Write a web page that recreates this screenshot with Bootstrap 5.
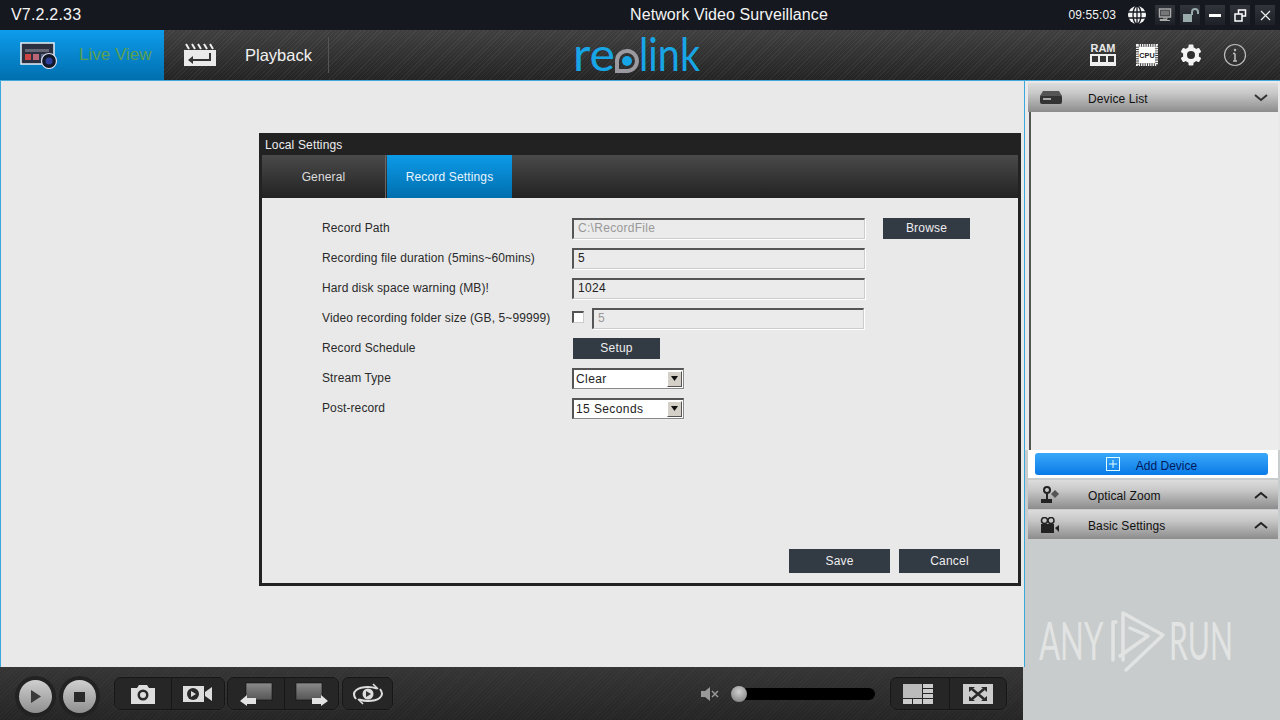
<!DOCTYPE html>
<html lang="en">
<head>
<meta charset="utf-8">
<title>Network Video Surveillance</title>
<link href="https://cdn.jsdelivr.net/npm/bootstrap@5.3.0/dist/css/bootstrap.min.css" rel="stylesheet">
<style>
html,body{height:720px;overflow:hidden}
body{width:1280px;font-family:"Liberation Sans",Arial,sans-serif;font-size:12px;color:#222;background:#c9cccc;position:relative}
.tbar{height:30px;background:#15181f;color:#f4f4f4}
.ver{width:630px;padding-left:11px;font-size:16px;letter-spacing:.2px}
.ttl{font-size:16px;letter-spacing:.1px}
.clk{font-size:12px;margin-right:11px;letter-spacing:.1px}
.wbtn{width:20px;height:20px;margin-right:5px;background:linear-gradient(#31343a,#1d2026);display:flex;align-items:center;justify-content:center}
.tools{height:51px;background:repeating-linear-gradient(135deg,rgba(255,255,255,.05) 0 1px,transparent 1px 3px),linear-gradient(#3f3f3f,#232323);border-bottom:1px solid #46a9dd;color:#f2f2f2}
.livetab{width:164px;height:50px;background:linear-gradient(#0e9cec,#006fae);font-size:17px;color:#5b9f52;gap:21px;padding-left:20px}
.playtab{width:165px;height:36px;gap:28px;padding-left:19px;font-size:16.5px;border-right:1px solid #555}
.brand{margin-left:244px;width:130px;height:50px}
.brand svg{display:block;margin-top:-8px}
.rtools{gap:0;margin-right:23px}
.rtool{width:44px;display:flex;justify-content:center}
.stage{height:639px}
.leftcol{width:1025px}
.work{height:586px;background:#e9e9e9;border-left:1px solid #3aa7dd;border-right:1px solid #3aa7dd;padding:52px 0 0 258px}
.dlg{width:762px;height:453px;border:3px solid #222;border-top:0;background:#e9e9e9}
.dlgttl{height:22px;background:#222;color:#eee;padding:2px 0 0 3px;font-size:12px;letter-spacing:.15px}
.dlgtabs{height:43px;background:linear-gradient(#4a4a4a,#222)}
.dtab{height:43px;display:flex;align-items:center;justify-content:center;color:#ddd;border:0;border-radius:0;background:transparent;font-size:12px;padding:0;letter-spacing:.15px}
.dtab1{width:124px;border-right:1px solid #666}
.dtab2{width:125px;background:linear-gradient(#0c9ae8,#006fae);color:#e8f6ff;margin-left:1px}
.dbody{padding:20px 18px 10px 60px;height:385px}
.frow{height:20px;margin-bottom:10px;display:flex;align-items:center}
.flab{width:250px;color:#2a2a2a;letter-spacing:.1px}
.fld.form-control{width:293px;height:21px;padding:0 4px 2px;border-radius:0;font-size:12px;color:#222;background:#ebebeb;border-width:2px 1px 1px 2px;border-style:solid;border-color:#555 #ccc #ccc #555;box-shadow:1px 1px 0 #fff;letter-spacing:.3px}
.fld.form-control:disabled{color:#999;background:#ebebeb}
.fld.shortfld{width:272px;margin-left:8px}
.chk.form-check-input{width:12px;height:12px;margin:-2px 0 0;border-radius:0;border-width:2px 1px 1px 2px;border-color:#555 #ccc #ccc #555;flex:none}
.dbtn.btn{background:#323a44;color:#eee;border:0;border-radius:0;font-size:12px;padding:0;height:21px;width:87px;letter-spacing:.2px}
.bwse.btn{margin-left:18px}
.setupb.btn{margin-left:1px}
.wide.btn{width:101px;height:24px}
.actions{gap:9px}
.selbox{width:112px;height:21px;border-width:2px 1px 1px 2px;border-style:solid;border-color:#555 #888 #888 #555;background:#fff;box-shadow:1px 1px 0 #eee}
.selbox .form-select{border:0;border-radius:0;background:transparent;padding:0 0 0 2px;height:18px;font-size:12px;color:#222;letter-spacing:.4px;flex:1;min-width:0}
.selarr{width:15px;height:16px;margin:1px;background:#d4d0c8;border:1px solid;border-color:#fff #555 #555 #fff;display:flex;align-items:center;justify-content:center}
.btbar{height:53px;width:1023px;background:repeating-linear-gradient(135deg,rgba(255,255,255,.025) 0 1px,transparent 1px 3px),linear-gradient(#353535,#252525);padding-left:19px}
.rbtn{width:33px;height:33px;border-radius:50%;background:linear-gradient(#cfcfcf,#8f8f8f);box-shadow:0 0 0 4px #222;display:flex;align-items:center;justify-content:center;margin:6px 11px 0 0;flex:none}
.bgrp{height:33px;background:#262626;border:1px solid #161616;border-radius:6px;box-shadow:0 0 1px #555}
.bcell{display:flex;align-items:center;justify-content:center;height:100%}
.bcell+.bcell{border-left:1px solid #161616}
.track{width:137px;height:12px;border-radius:6px;background:#000;position:relative}
.knob{position:absolute;left:-7px;top:-2px;width:16px;height:16px;border-radius:50%;background:radial-gradient(circle at 50% 35%,#cfcfcf,#777)}
.side{width:255px;height:639px;background:#c9cccc}
.sidetop{height:369px;background:#e9e9e9;padding:2px 2px 0 3px}
.phead{height:29px;background:linear-gradient(#dcdcdc,#c8c8c8 35%,#8c8c8c);color:#111;display:flex;align-items:center;position:relative;letter-spacing:.1px}
.phead .pic{width:60px;padding-left:12px;display:flex}
.phead .ptxt{padding-top:2px}
.phead .chev{margin-left:auto;margin-right:10px;display:flex}
.devlist{height:338px;border-left:2px solid #555;margin-left:1px;background:#ececec}
.addband{height:28px;margin-left:3px;width:250px;background:#fff;padding:3px 10px 3px 7px}
.addbtn.btn{width:233px;height:22px;border:0;border-radius:3px;background:linear-gradient(#3aa8f8,#0a7ae8);color:#001a5c;font-size:12px;padding:0;display:flex;align-items:center;justify-content:center;gap:16px}
.addbtn span{padding-top:4px}
.sidelow{padding:2px 2px 0 3px}
.sidelow .phead{height:29px;margin-bottom:1px}
.wmark{position:absolute;left:1036px;top:606px;pointer-events:none}
</style>
</head>
<body>
<header class="tbar d-flex align-items-center">
  <div class="ver">V7.2.2.33</div>
  <div class="ttl">Network Video Surveillance</div>
  <div class="ms-auto d-flex align-items-center">
    <span class="clk">09:55:03</span>
    <svg width="20" height="20" viewBox="0 0 20 20" class="me-2"><circle cx="10" cy="10" r="9" fill="#f4f4f4"/><g stroke="#15181f" stroke-width="1.3" fill="none"><ellipse cx="10" cy="10" rx="4" ry="9"/><path d="M1 7h18M1 13h18M10 1v18"/></g></svg>
    <div class="wbtn"><svg width="14" height="14" viewBox="0 0 14 14"><rect x="1.500" y="1" width="11" height="8" fill="none" stroke="#aaa" stroke-width="1.500"/><rect x="3" y="2.500" width="8" height="5" fill="#777"/><path d="M5 10h4v1.500H2v1h10" stroke="#aaa" fill="none"/></svg></div>
    <div class="wbtn"><svg width="17" height="15" viewBox="0 0 17 15"><rect x="1" y="6" width="9" height="8" fill="#9aa"/><path d="M10 7V4a3 3 0 0 1 6 0v2" stroke="#9aa" stroke-width="2" fill="none"/></svg></div>
    <div class="wbtn"><svg width="12" height="4"><rect width="12" height="3" y="1" fill="#fff"/></svg></div>
    <div class="wbtn"><svg width="13" height="13" viewBox="0 0 13 13" fill="none" stroke="#fff" stroke-width="1.500"><rect x="4.500" y="1" width="7" height="6"/><rect x="1" y="5" width="7" height="7" fill="#2a2d33"/></svg></div>
    <div class="wbtn"><svg width="11" height="11" viewBox="0 0 11 11" stroke="#eee" stroke-width="1.200"><path d="M1 1l9 9M10 1l-9 9"/></svg></div>
  </div>
</header>

<nav class="tools d-flex align-items-center">
  <div class="livetab d-flex align-items-center">
    <svg width="38" height="28" viewBox="0 0 38 28"><rect x="1" y="2" width="33" height="21" fill="#2a3040" stroke="#e8eef4" stroke-width="1.500"/><rect x="5" y="8" width="24" height="3" fill="#667"/><rect x="5" y="13" width="6" height="6" fill="#c44"/><rect x="13" y="13" width="6" height="6" fill="#b67"/><rect x="21" y="13" width="6" height="6" fill="#568"/><circle cx="29" cy="20" r="7.500" fill="#111827" stroke="#dde" stroke-width="1.200"/><circle cx="29" cy="20" r="3.500" fill="#2d3f9a"/></svg>
    <span>Live View</span>
  </div>
  <div class="playtab d-flex align-items-center">
    <svg width="34" height="24" viewBox="0 0 34 24"><path d="M1 7h32v16H1z" fill="#eaeaea"/><path d="M3 1l3 5M9 1l3 5M15 1l3 5M21 1l3 5M27 1l3 5" stroke="#eee" stroke-width="2"/><path d="M27 10v7H10" fill="none" stroke="#333" stroke-width="2"/><path d="M10 13v8l-5-4z" fill="#333"/></svg>
    <span>Playback</span>
  </div>
  <div class="brand">
    <svg width="130" height="66" viewBox="0 -8 130 66" role="img" aria-label="reolink">
      <text x="0" y="41" font-family="Lato,'Liberation Sans',sans-serif" font-size="46" fill="#17a5e6" textLength="42" lengthAdjust="spacingAndGlyphs">re</text>
      <path d="M44 41V30a10 10 0 1 1 10 11z" fill="none" stroke="#9a9aa0" stroke-width="4"/>
      <circle cx="54" cy="31" r="5" fill="#17a5e6"/>
      <text transform="translate(66 41) scale(.86 1)" font-family="Lato,'Liberation Sans',sans-serif" font-size="46" fill="#17a5e6">link</text>
    </svg>
  </div>
  <div class="rtools ms-auto d-flex align-items-center">
    <div class="rtool"><svg width="28" height="26" viewBox="0 0 28 26"><text x="14" y="10" text-anchor="middle" font-family="Liberation Sans" font-size="11" font-weight="700" fill="#e8e8e8">RAM</text><rect x="1" y="12" width="26" height="12" fill="#eee"/><g fill="#333"><rect x="3" y="14" width="6" height="6"/><rect x="11" y="14" width="6" height="6"/><rect x="19" y="14" width="6" height="6"/></g></svg></div>
    <div class="rtool"><svg width="22" height="22" viewBox="0 0 24 24"><rect x="1.500" y="1.500" width="21" height="21" fill="none" stroke="#f2f2f2" stroke-width="3" stroke-dasharray="1.500 1"/><rect x="3" y="3" width="18" height="18" fill="#fff"/><text x="12" y="15" text-anchor="middle" font-family="Liberation Sans" font-size="8" font-weight="700" fill="#222">CPU</text></svg></div>
    <div class="rtool"><svg width="24" height="24" viewBox="0 0 24 24"><g fill="#f4f4f4"><circle cx="12" cy="12" r="8"/><rect x="9.500" y="1.500" width="5" height="21" rx="1"/><rect x="9.500" y="1.500" width="5" height="21" rx="1" transform="rotate(60 12 12)"/><rect x="9.500" y="1.500" width="5" height="21" rx="1" transform="rotate(120 12 12)"/></g><circle cx="12" cy="12" r="4" fill="#2e2e2e"/></svg></div>
    <div class="rtool"><svg width="24" height="24" viewBox="0 0 24 24" fill="none" stroke="#bbb"><circle cx="12" cy="12" r="10.500" stroke-width="1.200"/><path d="M12 10.500V18M10 10.500h2M10 18h4" stroke-width="1.600"/><circle cx="12" cy="7" r="1.200" fill="#bbb" stroke="none"/></svg></div>
  </div>
</nav>

<div class="stage d-flex">
  <div class="leftcol">
    <main class="work">
      <section class="dlg d-flex flex-column">
        <div class="dlgttl d-flex align-items-center">Local Settings</div>
        <div class="dlgtabs nav">
          <button class="dtab dtab1 btn">General</button>
          <button class="dtab dtab2 btn">Record Settings</button>
        </div>
        <div class="dbody d-flex flex-column">
          <div class="frow"><span class="flab">Record Path</span><input class="fld form-control" disabled value="C:\RecordFile"><button class="dbtn bwse btn">Browse</button></div>
          <div class="frow"><span class="flab">Recording file duration (5mins~60mins)</span><input class="fld form-control" value="5"></div>
          <div class="frow"><span class="flab">Hard disk space warning (MB)!</span><input class="fld form-control" value="1024"></div>
          <div class="frow"><span class="flab">Video recording folder size (GB, 5~99999)</span><input type="checkbox" class="chk form-check-input"><input class="fld shortfld form-control" disabled value="5"></div>
          <div class="frow"><span class="flab">Record Schedule</span><button class="dbtn setupb btn">Setup</button></div>
          <div class="frow"><span class="flab">Stream Type</span><div class="selbox d-flex"><select class="form-select"><option>Clear</option></select><span class="selarr"><svg width="7" height="5"><path d="M0 0h7L3.500 5z" fill="#111"/></svg></span></div></div>
          <div class="frow"><span class="flab">Post-record</span><div class="selbox d-flex"><select class="form-select"><option>15 Seconds</option></select><span class="selarr"><svg width="7" height="5"><path d="M0 0h7L3.500 5z" fill="#111"/></svg></span></div></div>
          <div class="mt-auto d-flex justify-content-end actions">
            <button class="dbtn wide btn">Save</button>
            <button class="dbtn wide btn">Cancel</button>
          </div>
        </div>
      </section>
    </main>
    <footer class="btbar d-flex align-items-center">
      <div class="rbtn"><svg width="10" height="13"><path d="M0 0l10 6.500-10 6.500z" fill="#3a3a3a"/></svg></div>
      <div class="rbtn"><svg width="11" height="10"><rect width="11" height="10" fill="#2a2a2a"/></svg></div>
      <div class="bgrp d-flex" style="width:111px;margin-left:7px">
        <div class="bcell" style="width:56px"><svg width="26" height="20" viewBox="0 0 26 20"><path d="M1 4h6l2-3h8l2 3h6v16H1z" fill="#ddd"/><circle cx="13" cy="11" r="5.500" fill="#2a2a2a"/><circle cx="13" cy="11" r="3" fill="#ddd"/></svg></div>
        <div class="bcell flex-fill"><svg width="30" height="18" viewBox="0 0 30 18"><rect x="0" y="1" width="21" height="16" fill="#ddd"/><circle cx="10" cy="9" r="6" fill="#2a2a2a"/><path d="M8 6l5 3-5 3z" fill="#ddd"/><path d="M22 7l7-5v14l-7-5z" fill="#ddd"/></svg></div>
      </div>
      <div class="bgrp d-flex" style="width:112px;margin-left:2px">
        <div class="bcell" style="width:56px"><svg width="34" height="24" viewBox="0 0 34 24"><defs><linearGradient id="sc" x1="0" y1="0" x2="0" y2="1"><stop offset="0" stop-color="#8a8a8a"/><stop offset="1" stop-color="#555"/></linearGradient></defs><rect x="7" y="1" width="26" height="17" fill="url(#sc)" stroke="#111" stroke-width=".6"/><path d="M1 19l7-6v3h9v6H8v2z" fill="#e2e2e2"/></svg></div>
        <div class="bcell flex-fill"><svg width="34" height="24" viewBox="0 0 34 24"><rect x="1" y="1" width="26" height="17" fill="url(#sc)" stroke="#111" stroke-width=".6"/><path d="M33 19l-7-6v3h-9v6h9v2z" fill="#e2e2e2"/></svg></div>
      </div>
      <div class="bgrp d-flex justify-content-center align-items-center" style="width:51px;margin-left:3px"><svg width="34" height="22" viewBox="0 0 34 22" fill="none" stroke="#ddd" stroke-width="2"><path d="M5 16C-1 8 8 4 17 4c3 0 6 .500 9 1.500M29 6c6 8-3 12-12 12-3 0-6-.500-9-1.500"/><path d="M22 1l5 5M12 21l-5-5" stroke-width="1.600"/><circle cx="17" cy="11" r="5.500" fill="#ddd" stroke="none"/><path d="M15 8l5 3-5 3z" fill="#333" stroke="none"/></svg></div>
      <svg class="ms-auto" width="18" height="14" viewBox="0 0 18 14" style="margin-right:19px"><path d="M0 4h4l5-4v14l-5-4H0z" fill="#999"/><path d="M11 4l6 6M17 4l-6 6" stroke="#999" stroke-width="1.500"/></svg>
      <div class="track"><div class="knob"></div></div>
      <div class="bgrp d-flex" style="width:117px;margin-left:15px;margin-right:16px">
        <div class="bcell pe-1" style="width:58px"><svg width="30" height="20" viewBox="0 0 30 20"><rect width="19" height="14" fill="#bbb"/><g fill="#ccc"><rect x="20" width="10" height="4"/><rect x="20" y="5" width="10" height="4"/><rect x="20" y="10" width="10" height="4"/><rect y="15" width="9" height="5"/><rect x="10" y="15" width="9" height="5"/><rect x="20" y="15" width="10" height="5"/></g></svg></div>
        <div class="bcell flex-fill"><svg width="30" height="20" viewBox="0 0 30 20"><rect width="30" height="20" fill="#ccc"/><path d="M9 5l12 10M21 5L9 15" stroke="#2a2a2a" stroke-width="2.500"/><path d="M6 3h6L6 8zM24 3h-6l6 5zM6 17h6l-6-5zM24 17h-6l6-5z" fill="#2a2a2a"/></svg></div>
      </div>
    </footer>
  </div>
  <aside class="side">
    <div class="sidetop">
      <div class="phead">
        <span class="pic"><svg width="22" height="15" viewBox="0 0 22 15"><rect y="5" width="22" height="9" rx="2" fill="#333"/><path d="M3 1h16l3 5H0z" fill="#555"/><rect x="3" y="8" width="8" height="2" fill="#aaa"/></svg></span>
        <span class="ptxt">Device List</span>
        <span class="chev"><svg width="14" height="8" fill="none" stroke="#333" stroke-width="2"><path d="M1 1l6 5 6-5"/></svg></span>
      </div>
      <div class="devlist"></div>
    </div>
    <div class="addband"><button class="addbtn btn"><svg width="14" height="14" fill="none" stroke="#dff" stroke-width="1"><rect x=".5" y=".5" width="13" height="13"/><path d="M7 3v8M3 7h8"/></svg><span>Add Device</span></button></div>
    <div class="sidelow">
      <div class="phead">
        <span class="pic"><svg width="20" height="18" viewBox="0 0 20 18"><circle cx="7" cy="4" r="3" fill="none" stroke="#222" stroke-width="2"/><path d="M6 6h2v7H6zM1 13h11v4H1z" fill="#222"/><path d="M15 4l4 4-4 4-4-4z" fill="#555"/></svg></span>
        <span class="ptxt">Optical Zoom</span>
        <span class="chev"><svg width="14" height="8" fill="none" stroke="#222" stroke-width="2"><path d="M1 7l6-5 6 5"/></svg></span>
      </div>
      <div class="phead">
        <span class="pic"><svg width="20" height="16" viewBox="0 0 20 16"><circle cx="4.500" cy="3.500" r="3" fill="none" stroke="#222" stroke-width="1.500"/><circle cx="11" cy="3.500" r="3" fill="none" stroke="#222" stroke-width="1.500"/><rect x="1" y="7" width="13" height="9" fill="#222"/><path d="M15 11l4-3v7z" fill="#222"/></svg></span>
        <span class="ptxt">Basic Settings</span>
        <span class="chev"><svg width="14" height="8" fill="none" stroke="#222" stroke-width="2"><path d="M1 7l6-5 6 5"/></svg></span>
      </div>
    </div>
  </aside>
</div>

<svg class="wmark" width="220" height="70" viewBox="0 0 220 70" fill="none">
  <text transform="translate(3 54) scale(.6 1)" font-family="Lato,'Liberation Sans',sans-serif" font-size="52" fill="#e2e4e4">ANY</text>
  <g stroke="#e2e4e4" stroke-width="3.500" stroke-linejoin="round" stroke-linecap="round"><path d="M80 16h-3v38M87 54V7l40 22-37 35M94 22l18 8-28 20"/></g>
  <text transform="translate(133 54) scale(.58 1)" font-family="Lato,'Liberation Sans',sans-serif" font-size="52" fill="#e2e4e4">RUN</text>
</svg>
<script src="https://cdn.jsdelivr.net/npm/bootstrap@5.3.0/dist/js/bootstrap.bundle.min.js"></script>
</body>
</html>
